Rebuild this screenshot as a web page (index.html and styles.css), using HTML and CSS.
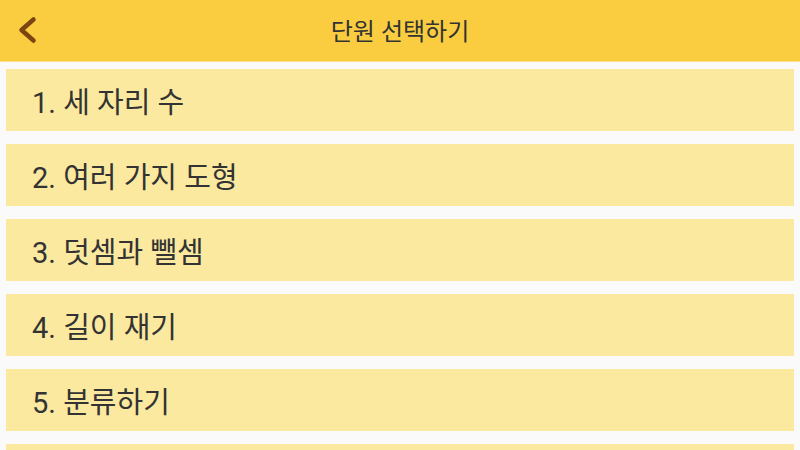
FILE: index.html
```html
<!DOCTYPE html>
<html lang="ko">
<head>
<meta charset="utf-8">
<link rel="stylesheet" href="styles.css">
</head>
<body>
<header class="appbar">
  <button class="back" aria-label="back">
    <svg width="24" height="32" viewBox="0 0 24 32"><path d="M17.5 5.5 L5.5 16 L17.5 26.5" fill="none" stroke="#7b4512" stroke-width="4.5" stroke-linecap="round" stroke-linejoin="round"/></svg>
  </button>
  <h1 class="title">단원 선택하기</h1>
</header>
<ul class="list">
  <li class="item">1. 세 자리 수</li>
  <li class="item">2. 여러 가지 도형</li>
  <li class="item">3. 덧셈과 뺄셈</li>
  <li class="item">4. 길이 재기</li>
  <li class="item">5. 분류하기</li>
  <li class="item"></li>
</ul>
</body>
</html>
```
FILE: styles.css
```css
* { box-sizing: border-box; }
html, body { margin: 0; padding: 0; }
body {
  width: 800px;
  height: 450px;
  overflow: hidden;
  background: #fafafa;
  font-family: Roboto, "Noto Sans CJK KR", sans-serif;
  color: #333333;
}
.appbar {
  height: 62px;
  background: #f9cd3f;
  border-bottom: 1px solid #fbe08a;
  display: flex;
  align-items: center;
  justify-content: center;
  position: relative;
}
.back {
  position: absolute;
  left: 16px;
  top: 14px;
  width: 24px;
  height: 32px;
  padding: 0;
  border: 0;
  background: none;
  display: flex;
}
.title {
  margin: 0;
  font-size: 24px;
  font-weight: 400;
  color: #333333;
  padding-bottom: 2px;
}
.list {
  list-style: none;
  margin: 0;
  padding: 7px 6px 0;
  display: flex;
  flex-direction: column;
  gap: 13px;
}
.item {
  height: 62px;
  flex: none;
  background: #fae99f;
  display: flex;
  align-items: center;
  padding-left: 26px;
  font-size: 29px;
  color: #333333;
}
```
